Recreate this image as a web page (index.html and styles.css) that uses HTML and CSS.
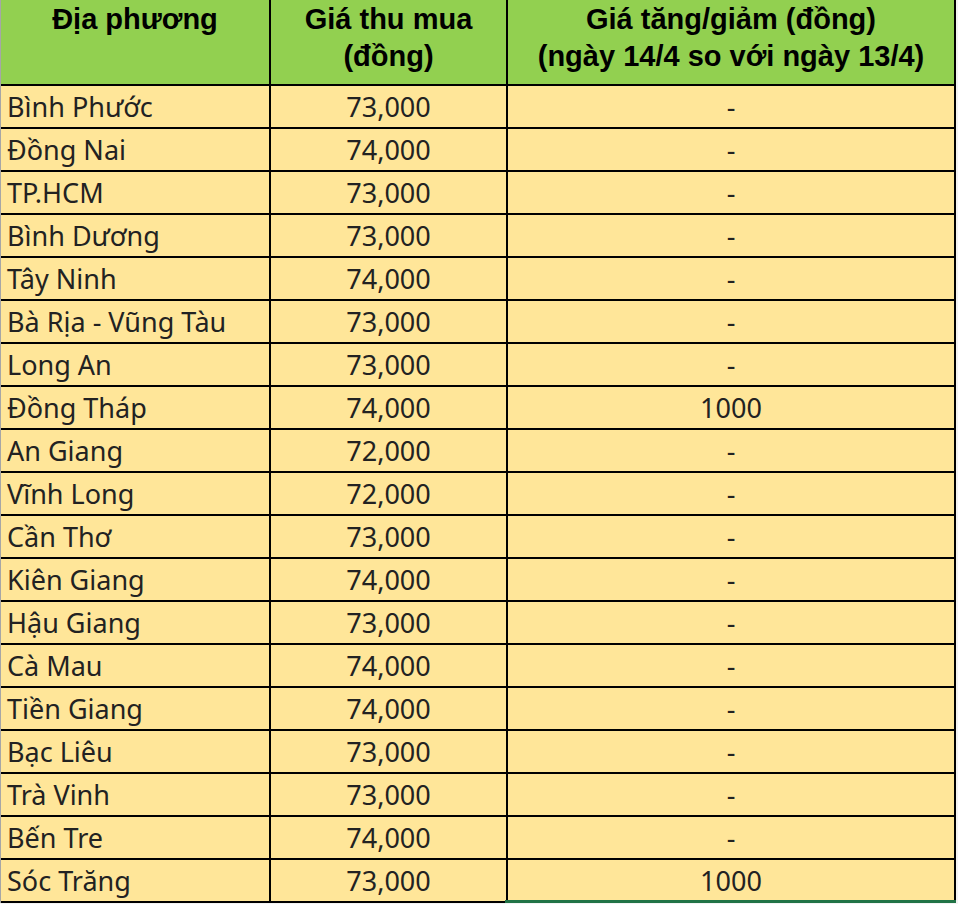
FILE: index.html
```html
<!DOCTYPE html>
<html lang="vi">
<head>
<meta charset="utf-8">
<title>Giá thu mua</title>
<link rel="stylesheet" href="styles.css">
</head>
<body>
<div class="sheet">
<table class="price-table">
  <colgroup>
    <col class="c1"><col class="c2"><col class="c3">
  </colgroup>
  <thead>
    <tr>
      <th class="h-top">Địa phương</th>
      <th class="h-top">Giá thu mua<br>(đồng)</th>
      <th class="h-top">Giá tăng/giảm (đồng)<br>(ngày 14/4 so với ngày 13/4)</th>
    </tr>
  </thead>
  <tbody>
    <tr><td>Bình Phước</td><td class="num">73,000</td><td class="chg">-</td></tr>
    <tr><td>Đồng Nai</td><td class="num">74,000</td><td class="chg">-</td></tr>
    <tr><td>TP.HCM</td><td class="num">73,000</td><td class="chg">-</td></tr>
    <tr><td>Bình Dương</td><td class="num">73,000</td><td class="chg">-</td></tr>
    <tr><td>Tây Ninh</td><td class="num">74,000</td><td class="chg">-</td></tr>
    <tr><td>Bà Rịa - Vũng Tàu</td><td class="num">73,000</td><td class="chg">-</td></tr>
    <tr><td>Long An</td><td class="num">73,000</td><td class="chg">-</td></tr>
    <tr><td>Đồng Tháp</td><td class="num">74,000</td><td class="chg">1000</td></tr>
    <tr><td>An Giang</td><td class="num">72,000</td><td class="chg">-</td></tr>
    <tr><td>Vĩnh Long</td><td class="num">72,000</td><td class="chg">-</td></tr>
    <tr><td>Cần Thơ</td><td class="num">73,000</td><td class="chg">-</td></tr>
    <tr><td>Kiên Giang</td><td class="num">74,000</td><td class="chg">-</td></tr>
    <tr><td>Hậu Giang</td><td class="num">73,000</td><td class="chg">-</td></tr>
    <tr><td>Cà Mau</td><td class="num">74,000</td><td class="chg">-</td></tr>
    <tr><td>Tiền Giang</td><td class="num">74,000</td><td class="chg">-</td></tr>
    <tr><td>Bạc Liêu</td><td class="num">73,000</td><td class="chg">-</td></tr>
    <tr><td>Trà Vinh</td><td class="num">73,000</td><td class="chg">-</td></tr>
    <tr><td>Bến Tre</td><td class="num">74,000</td><td class="chg">-</td></tr>
    <tr><td>Sóc Trăng</td><td class="num">73,000</td><td class="chg selected">1000</td></tr>
  </tbody>
</table>
</div>
</body>
</html>
```

FILE: styles.css
```css
html, body {
  margin: 0;
  padding: 0;
  background: #ffffff;
}

.sheet {
  width: 958px;
  height: 904px;
  overflow: hidden;
  background: #f3f3f3;
}

.price-table {
  border-collapse: separate;
  border-spacing: 0;
  table-layout: fixed;
  width: 956px;
  border-left: 1px solid #a6a6a6;
}

.c1 { width: 270px; }
.c2 { width: 237px; }
.c3 { width: 448px; }

.price-table th,
.price-table td {
  border-right: 2px solid #000;
  border-bottom: 2px solid #000;
  padding: 0;
  box-sizing: border-box;
}

.price-table th {
  height: 86px;
  background: #92d050;
  color: #000;
  font-family: "Liberation Sans", Arial, sans-serif;
  font-weight: bold;
  font-size: 29px;
  line-height: 37px;
  text-align: center;
  vertical-align: top;
  padding-top: 1px;
}

.price-table td {
  height: 43px;
  background: #ffe699;
  color: #222;
  font-family: "Noto Sans", "Open Sans", sans-serif;
  font-size: 27px;
  line-height: 30px;
  vertical-align: bottom;
  padding-bottom: 5px;
  white-space: nowrap;
}

.price-table td:first-child {
  padding-left: 6px;
}

.price-table td.num,
.price-table td.chg {
  text-align: center;
}

.price-table td.selected {
  position: relative;
}

.price-table td.selected::after {
  content: "";
  position: absolute;
  left: -3px;
  right: -2px;
  bottom: -2px;
  height: 3px;
  background: #217346;
}
```
